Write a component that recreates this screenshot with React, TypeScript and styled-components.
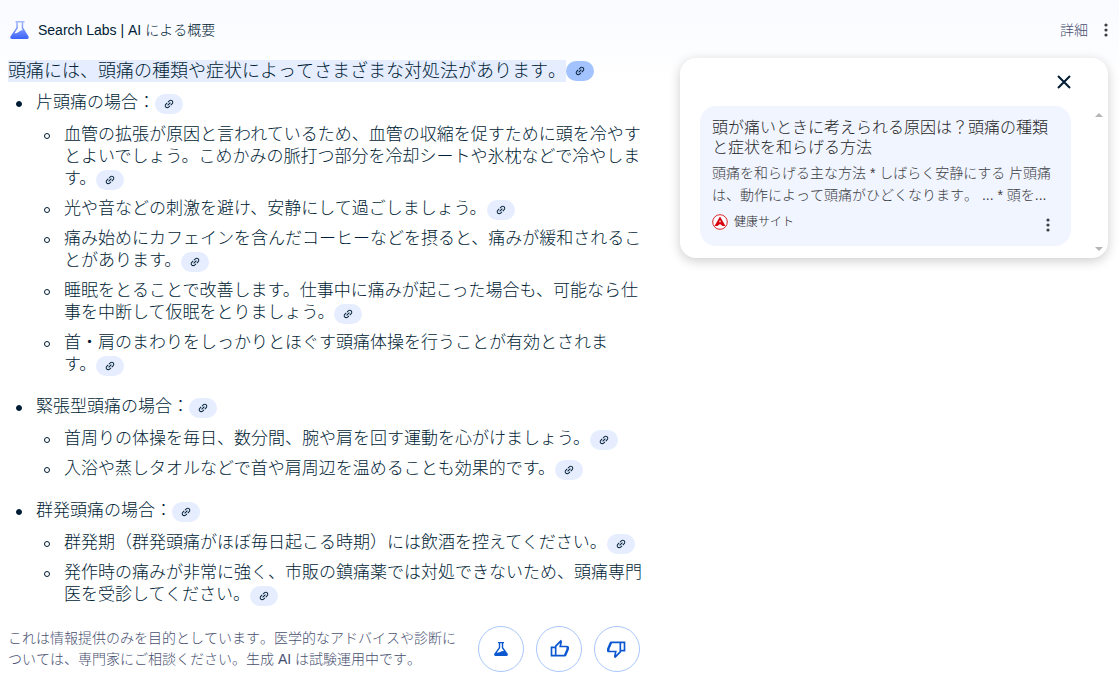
import React from "react";
import styled, { createGlobalStyle } from "styled-components";

const GlobalStyle = createGlobalStyle`
  *, *::before { box-sizing: border-box; }
  body {
    margin: 0;
    background: #fff;
    color: #001d35;
    font-family: "Liberation Sans", "Noto Sans CJK JP", sans-serif;
    font-weight: 300;
    font-kerning: none;
  }
  ul, p, h2, h3 { margin: 0; padding: 0; font-weight: inherit; }
  ul { list-style: none; }
  button { margin: 0; padding: 0; border: 0; background: none; font: inherit; color: inherit; cursor: pointer; }
`;

const Page = styled.div`
  padding: 0 8px;
  background: linear-gradient(#f8faff, #fff 80px);
`;

const Header = styled.header`
  display: flex;
  align-items: center;
  height: 58px;
  padding-top: 2px;
  font-size: 14px;
  line-height: 22px;
`;

const Brand = styled.div`
  display: flex;
  flex: 1;
  align-items: center;
  gap: 8px;
`;

const DetailLink = styled.a`
  color: #474f70;
  text-decoration: none;
`;

const MoreButton = styled.button`
  display: flex;
  justify-content: center;
  width: 20px;
  color: #3c4043;
  margin-left: 8px;
  margin-right: -5px;
`;

const Columns = styled.div`
  display: flex;
  align-items: flex-start;
  gap: 38px;
`;

const Overview = styled.main`
  flex: 0 1 634px;
  padding-top: 2px;
  font-size: 17px;
  line-height: 22px;
`;

const Lead = styled.h2`
  display: flex;
  align-items: center;
  font-size: 18px;
  line-height: 22px;
`;

const Highlight = styled.mark`
  background: #e5edff;
  color: inherit;
`;

const TopicList = styled.ul`
  display: grid;
  gap: 20px;
  margin-top: 10px;
  font-kerning: normal;
`;

const PointList = styled.ul`
  display: grid;
  gap: 8px;
  margin-top: 10px;
`;

const Item = styled.li<{ $ring?: boolean }>`
  display: grid;
  grid-template-columns: 28px minmax(0, 1fr);

  &::before {
    content: "";
    width: 6px;
    height: 6px;
    margin: 9px 0 0 8px;
    border: 1px solid #001d35;
    border-radius: 50%;
    background: ${(p) => (p.$ring ? "transparent" : "#001d35")};
  }
`;

const Tail = styled.span`
  white-space: nowrap;
`;

const Chip = styled.button<{ $active?: boolean }>`
  && {
    display: inline-flex;
    align-items: center;
    justify-content: center;
    width: 28px;
    height: 20px;
    border-radius: 10px;
    vertical-align: -2px;
    margin: -4px 0;
    background: ${(p) => (p.$active ? "#a3c3ff" : "#e5edff")};
  }
`;

const Footer = styled.footer`
  display: flex;
  align-items: center;
  gap: 12px;
  margin-top: 20px;
  padding-right: 2px;
  color: #474f70;
  font-size: 14px;
  line-height: 21px;
`;

const Disclaimer = styled.p`
  flex: 1;
  margin-right: 8px;
`;

const RoundButton = styled.button`
  && {
    display: flex;
    align-items: center;
    justify-content: center;
    width: 46px;
    height: 46px;
    border: 1px solid #a8c7fa;
    border-radius: 50%;
    color: #0b57d0;
  }
`;

const Panel = styled.aside`
  display: flex;
  flex: 1;
  min-width: 0;
  height: 200px;
  margin-right: 3px;
  padding-left: 20px;
  border-radius: 16px;
  background: #fff;
  box-shadow: 0 3px 12px rgba(0, 0, 0, 0.2);
`;

const PanelBody = styled.div`
  flex: 1;
  min-width: 0;
`;

const PanelTop = styled.div`
  display: flex;
  align-items: center;
  justify-content: flex-end;
  height: 48px;
`;

const CloseButton = styled.button`
  display: flex;
`;

const SourceCard = styled.article`
  height: 140px;
  padding: 12px;
  border-radius: 16px;
  background: #f1f5ff;
  color: #1f1f1f;
`;

const SourceTitle = styled.h3`
  font-size: 16px;
  line-height: 20px;
`;

const Snippet = styled.p`
  margin-top: 4px;
  color: #3c4043;
  font-size: 14px;
  line-height: 22px;
`;

const SourceRow = styled.div`
  display: flex;
  align-items: flex-start;
  gap: 6px;
  padding-top: 8px;
  font-size: 12px;
  line-height: 16px;
`;

const SourceName = styled.a`
  flex: 1;
  color: inherit;
  text-decoration: none;
`;

const CardMenu = styled.button`
  display: flex;
  justify-content: center;
  width: 22px;
  padding-top: 4px;
  color: #3c4043;
`;

const ScrollTrack = styled.div`
  display: flex;
  flex-direction: column;
  align-items: center;
  justify-content: space-between;
  width: 18px;
  margin-left: 19px;
  padding: 55px 0 7px;
`;

const LinkIcon = () => (
  <svg width="12" height="12" viewBox="0 0 24 24" fill="currentColor" aria-hidden="true">
    <path
      transform="rotate(-45 12 12)"
      d="M3.9 12c0-1.71 1.39-3.1 3.1-3.1h4V7H7c-2.76 0-5 2.24-5 5s2.24 5 5 5h4v-1.9H7c-1.71 0-3.1-1.39-3.1-3.1zM8 13h8v-2H8v2zm9-6h-4v1.9h4c1.71 0 3.1 1.39 3.1 3.1s-1.39 3.1-3.1 3.1h-4V17h4c2.76 0 5-2.24 5-5s-2.24-5-5-5z"
    />
  </svg>
);

const DotsIcon = () => (
  <svg width="4" height="14" viewBox="0 0 4 14" fill="currentColor" aria-hidden="true">
    <circle cx="2" cy="2" r="1.6" />
    <circle cx="2" cy="7" r="1.6" />
    <circle cx="2" cy="12" r="1.6" />
  </svg>
);

const LabsIcon = () => (
  <svg width="22" height="20" viewBox="0 0 22 20" aria-hidden="true">
    <defs>
      <linearGradient id="flask" x1="0" y1="0" x2="0" y2="1">
        <stop offset="0" stopColor="#a9bcff" />
        <stop offset="1" stopColor="#3b63fb" />
      </linearGradient>
    </defs>
    <path
      fill="url(#flask)"
      fillRule="evenodd"
      d="M7.500 1h9v1.500h-1.300v5.300l5.200 8.400c.8 1.500 0 2.800-1.500 2.800H4.100c-1.500 0-2.300-1.300-1.500-2.800l5.700-8.400V2.500H7.500zM9.800 2.500v5.800l-3.400 5c2.200.2 3.400-.8 4.800-1.800 1.200-.9 2-1.200 3.500-1.300l-1-2V2.500z"
    />
  </svg>
);

const FlaskIcon = () => (
  <svg width="16" height="16" viewBox="0 0 16 16" aria-hidden="true">
    <path
      fill="currentColor"
      fillRule="evenodd"
      d="M5 1h6v1.300h-.8v4.200l4.500 6.200c.6 1.100 0 2.300-1.200 2.300H2.500c-1.200 0-1.800-1.200-1.200-2.300l4.500-6.200V2.300H5zM7.200 2.300v4.600L3.900 11.600c1.900.2 2.800-.5 4-1.100 1-.5 1.800-.7 3-.6L8.800 6.900V2.300z"
    />
  </svg>
);

const ThumbIcon = ({ down }: { down?: boolean }) => (
  <svg width="20" height="20" viewBox="0 0 24 24" fill="currentColor" aria-hidden="true">
    <path
      transform={down ? "rotate(180 12 12)" : undefined}
      d="M21 8h-6.310l.95-4.570.03-.32c0-.41-.17-.79-.44-1.060L14.170 1 7.580 7.590C7.220 7.950 7 8.450 7 9H2v12h17c.83 0 1.540-.5 1.840-1.220l3.020-7.050c.09-.23.14-.47.14-.73v-2c0-1.100-.9-2-3-2zM4 19v-8h3v8zm5 0V9l4.340-4.340L12.230 10H21v2l-3 7z"
    />
  </svg>
);

const CloseIcon = () => (
  <svg width="14" height="14" viewBox="0 0 14 14" stroke="#001d35" strokeWidth="2" aria-hidden="true">
    <path d="M1 1l12 12M13 1L1 13" />
  </svg>
);

const SiteLogo = () => (
  <svg width="16" height="16" viewBox="0 0 16 16" aria-hidden="true">
    <circle cx="8" cy="8" r="7.300" fill="#fff" stroke="#d8232a" />
    <path fill="#d7000f" fillRule="evenodd" d="M8 2.500L13.500 12H10.500L8 10 5.500 12H2.500zM8 6L7 8.600 8 8 9 8.600z" />
  </svg>
);

const Arrow = ({ down }: { down?: boolean }) => (
  <svg width="8" height="4" viewBox="0 0 8 4" fill="#b5b5b5" aria-hidden="true">
    <path d={down ? "M0 0h8L4 4z" : "M0 4h8L4 0z"} />
  </svg>
);

const SourceChip = ({ active }: { active?: boolean }) => (
  <Chip type="button" $active={active} aria-label="関連リンクを表示">
    <LinkIcon />
  </Chip>
);

const WithChip = ({ text }: { text: string }) => (
  <div>
    {text.slice(0, -2)}
    <Tail>
      {text.slice(-2)}
      <SourceChip />
    </Tail>
  </div>
);

const topics = [
  {
    title: "片頭痛の場合：",
    points: [
      "血管の拡張が原因と言われているため、血管の収縮を促すために頭を冷やすとよいでしょう。こめかみの脈打つ部分を冷却シートや氷枕などで冷やします。",
      "光や音などの刺激を避け、安静にして過ごしましょう。",
      "痛み始めにカフェインを含んだコーヒーなどを摂ると、痛みが緩和されることがあります。",
      "睡眠をとることで改善します。仕事中に痛みが起こった場合も、可能なら仕事を中断して仮眠をとりましょう。",
      "首・肩のまわりをしっかりとほぐす頭痛体操を行うことが有効とされます。",
    ],
  },
  {
    title: "緊張型頭痛の場合：",
    points: [
      "首周りの体操を毎日、数分間、腕や肩を回す運動を心がけましょう。",
      "入浴や蒸しタオルなどで首や肩周辺を温めることも効果的です。",
    ],
  },
  {
    title: "群発頭痛の場合：",
    points: [
      "群発期（群発頭痛がほぼ毎日起こる時期）には飲酒を控えてください。",
      "発作時の痛みが非常に強く、市販の鎮痛薬では対処できないため、頭痛専門医を受診してください。",
    ],
  },
];

export default function App() {
  return (
    <Page lang="ja">
      <GlobalStyle />
      <Header>
        <Brand>
          <LabsIcon />
          <span>Search Labs | AI による概要</span>
        </Brand>
        <DetailLink href="#details">詳細</DetailLink>
        <MoreButton type="button" aria-label="その他">
          <DotsIcon />
        </MoreButton>
      </Header>
      <Columns>
        <Overview>
          <Lead>
            <Highlight>頭痛には、頭痛の種類や症状によってさまざまな対処法があります。</Highlight>
            <SourceChip active />
          </Lead>
          <TopicList>
            {topics.map((topic) => (
              <Item key={topic.title}>
                <div>
                  <WithChip text={topic.title} />
                  <PointList>
                    {topic.points.map((point) => (
                      <Item key={point} $ring>
                        <WithChip text={point} />
                      </Item>
                    ))}
                  </PointList>
                </div>
              </Item>
            ))}
          </TopicList>
          <Footer>
            <Disclaimer>
              これは情報提供のみを目的としています。医学的なアドバイスや診断については、専門家にご相談ください。生成 AI は試験運用中です。
            </Disclaimer>
            <RoundButton type="button" aria-label="Search Labs">
              <FlaskIcon />
            </RoundButton>
            <RoundButton type="button" aria-label="高く評価">
              <ThumbIcon />
            </RoundButton>
            <RoundButton type="button" aria-label="低く評価">
              <ThumbIcon down />
            </RoundButton>
          </Footer>
        </Overview>
        <Panel>
          <PanelBody>
            <PanelTop>
              <CloseButton type="button" aria-label="閉じる">
                <CloseIcon />
              </CloseButton>
            </PanelTop>
            <SourceCard>
              <SourceTitle>頭が痛いときに考えられる原因は？頭痛の種類と症状を和らげる方法</SourceTitle>
              <Snippet>
                頭痛を和らげる主な方法 * しばらく安静にする 片頭痛は、動作によって頭痛がひどくなります。 ... * 頭を...
              </Snippet>
              <SourceRow>
                <SiteLogo />
                <SourceName href="#source">健康サイト</SourceName>
                <CardMenu type="button" aria-label="この結果について">
                  <DotsIcon />
                </CardMenu>
              </SourceRow>
            </SourceCard>
          </PanelBody>
          <ScrollTrack>
            <Arrow />
            <Arrow down />
          </ScrollTrack>
        </Panel>
      </Columns>
    </Page>
  );
}
